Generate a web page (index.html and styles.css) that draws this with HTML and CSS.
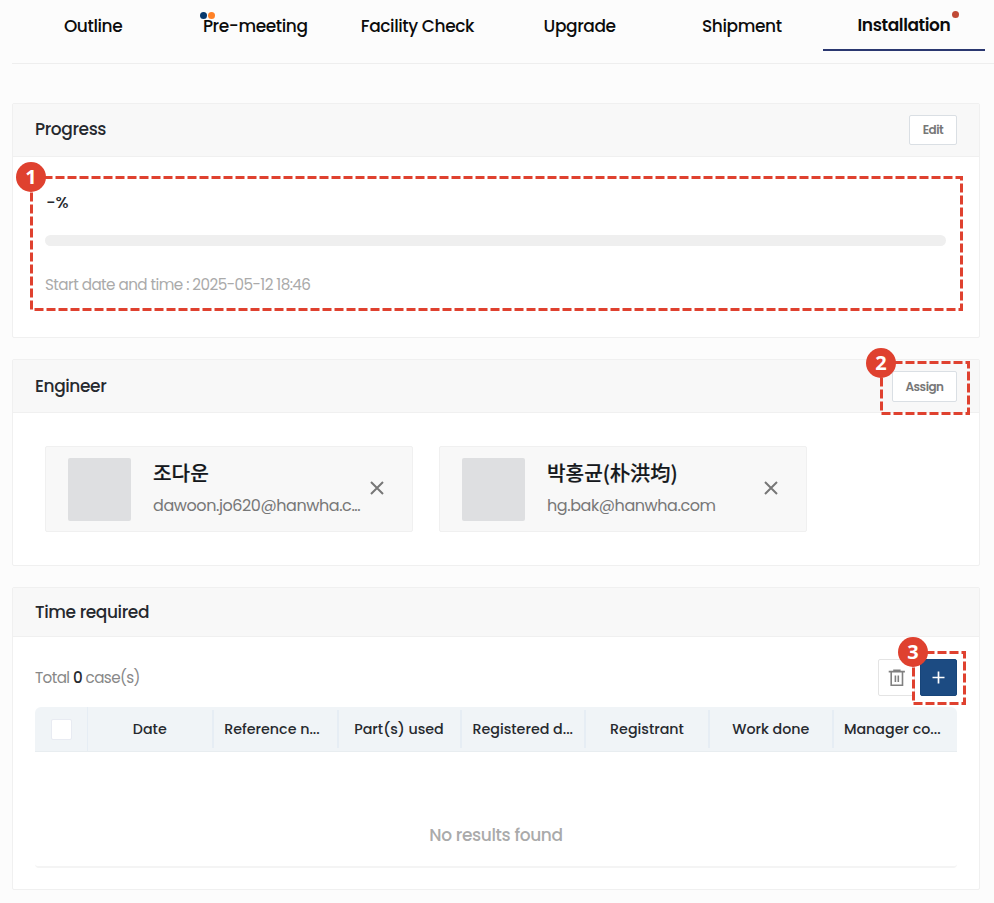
FILE: index.html
```html
<!DOCTYPE html>
<html lang="en">
<head>
<meta charset="utf-8">
<title>Installation</title>
<link rel="stylesheet" href="styles.css">
</head>
<body>
<nav class="tabs">
  <a class="tab"><span>Outline</span></a>
  <a class="tab"><span class="tab-label">Pre-meeting<i class="dot dot-navy"></i><i class="dot dot-orange"></i></span></a>
  <a class="tab"><span>Facility Check</span></a>
  <a class="tab"><span>Upgrade</span></a>
  <a class="tab"><span>Shipment</span></a>
  <a class="tab active"><span class="tab-label">Installation<i class="dot dot-red"></i></span></a>
</nav>
<main>
  <section class="card progress-card">
    <header class="card-head"><h2>Progress</h2><button class="btn edit">Edit</button></header>
    <div class="progress-body">
      <div class="percent">-%</div>
      <div class="bar"></div>
      <p class="start">Start date and time : 2025-05-12 18:46</p>
      <svg class="callout callout-1" width="933" height="135"><path d="M1.5 1.5H931.5V133.5H1.5Z"/></svg>
      <span class="badge badge-1">1</span>
    </div>
  </section>
  <section class="card engineer-card">
    <header class="card-head"><h2>Engineer</h2>
      <div class="anchor"><button class="btn assign">Assign</button>
        <svg class="callout callout-2" width="90" height="54"><path d="M1.5 1.5H88.5V52.5H1.5Z"/></svg>
        <span class="badge badge-2">2</span></div>
    </header>
    <div class="people">
      <article class="person">
        <div class="avatar"></div>
        <div class="info"><strong>조다운</strong><span>dawoon.jo620@hanwha.c...</span></div>
        <svg class="close" width="14" height="14"><path d="M1 1L13 13M13 1L1 13"/></svg>
      </article>
      <article class="person">
        <div class="avatar"></div>
        <div class="info"><strong>박홍균(朴洪均)</strong><span>hg.bak@hanwha.com</span></div>
        <svg class="close" width="14" height="14"><path d="M1 1L13 13M13 1L1 13"/></svg>
      </article>
    </div>
  </section>
  <section class="card time-card">
    <header class="card-head"><h2>Time required</h2></header>
    <div class="time-body">
      <div class="toolbar">
        <p class="total">Total <b>0</b> case(s)</p>
        <div class="tools">
          <button class="tool trash"><svg width="18" height="18"><path d="M.7 2.6H16.9M5.2 1.2H12.6M3.2 3V16.2H14.5V3M7.4 6.5V13M10.3 6.5V13"/></svg></button>
          <div class="anchor"><button class="tool add"><svg width="13" height="13"><path d="M6.5 .5V12.5M.5 6.5H12.5"/></svg></button>
            <svg class="callout callout-3" width="54" height="54"><path d="M1.5 1.5H52.5V52.5H1.5Z"/></svg>
            <span class="badge badge-3">3</span></div>
        </div>
      </div>
      <div class="grid-head">
        <div class="cell check-cell"><span class="check"></span></div>
        <div class="cell">Date</div>
        <div class="cell clipped">Reference n...</div>
        <div class="cell">Part(s) used</div>
        <div class="cell">Registered d...</div>
        <div class="cell">Registrant</div>
        <div class="cell">Work done</div>
        <div class="cell clipped">Manager co...</div>
      </div>
      <div class="empty">No results found</div>
    </div>
  </section>
</main>
</body>
</html>
```
FILE: styles.css
```css
* { box-sizing: border-box; }
body {
  margin: 0;
  height: 903px;
  overflow: hidden;
  background: #fcfcfc;
  font-family: Poppins, Inter, "Noto Sans CJK KR", sans-serif;
  color: #26292e;
}
h2, p { margin: 0; }
button { font: inherit; padding: 0; }
.tabs { display: flex; height: 64px; margin-left: 12px; padding-right: 9px; border-bottom: 1px solid #eee; }
.tab { flex: 1; height: 51px; display: flex; align-items: center; justify-content: center; font-size: 17px; font-weight: 500; letter-spacing: -.4px; color: #0c0c0c; white-space: nowrap; }
.tab.active { border-bottom: 2px solid #2a3770; font-weight: 600; }
.tab-label { position: relative; }
.dot { position: absolute; width: 7px; height: 7px; border-radius: 50%; }
.dot-navy { left: -3px; top: -1px; background: #06386d; }
.dot-orange { left: 5.5px; top: -1px; background: #ff8126; }
.dot-red { right: -9px; top: -1px; background: #c04a35; }

main { padding: 39px 14px 0 12px; display: flex; flex-direction: column; gap: 21px; }
.card { background: #fff; border: 1px solid #f0f0f0; border-radius: 2px; }
.card-head { display: flex; align-items: center; justify-content: space-between; height: 53px; padding: 0 22px; background: #f8f8f8; border-bottom: 1px solid #f0f0f0; }
.card-head h2 { font-size: 17px; font-weight: 500; line-height: 24px; letter-spacing: -.4px; }
.progress-card { height: 235px; }
.progress-card h2 { padding-bottom: 2px; }
.engineer-card { height: 207px; }
.time-card { height: 303px; }
.time-card .card-head { height: 49px; }
.btn { display: block; height: 30px; background: #fff; border: 1px solid #dadfe4; border-radius: 2px; font-size: 12px; font-weight: 600; letter-spacing: -.5px; color: #777; }
.edit { width: 48px; }
.assign { width: 65px; height: 31px; padding-top: 1px; }
.anchor { position: relative; }

.progress-body { position: relative; padding: 34px 33px 0 32px; }
.percent { font-size: 16.5px; font-weight: 500; line-height: 24px; padding-left: 1px; letter-spacing: -.2px; }
.bar { height: 11px; margin-top: 20px; border-radius: 6px; background: #efefef; }
.start { margin-top: 27px; line-height: 24px; font-size: 15.2px; letter-spacing: -.55px; color: #aaa; white-space: nowrap; }

.callout { position: absolute; pointer-events: none; }
.callout path { fill: none; stroke: #df412f; stroke-width: 3; stroke-dasharray: 9 3; }
.callout-1 { left: 17px; top: 19px; }
.callout-2 { left: -12px; top: -10px; }
.callout-3 { left: -8px; top: -8px; }
.badge { position: absolute; width: 30px; height: 30px; border-radius: 50%; background: #df412f; color: #fff; font: 700 20px/29px "Noto Sans", sans-serif; text-align: center; }
.badge-1 { left: 3px; top: 5px; }
.badge-2 { left: -26px; top: -23px; }
.badge-3 { left: -22px; top: -22px; }

.people { display: flex; gap: 26px; padding: 33px 32px 0; }
.person { width: 368px; height: 86px; display: flex; align-items: center; padding: 0 28px 0 22px; background: #f8f8f8; border: 1px solid #f0f0f0; border-radius: 2px; }
.avatar { width: 63px; height: 63px; background: #dedfe1; border-radius: 2px; flex: none; }
.info { flex: 1; margin: 2px 0 0 22px; display: flex; flex-direction: column; min-width: 0; white-space: nowrap; }
.info strong { font: 500 20.2px/30px "Noto Sans CJK KR", sans-serif; color: #15181c; -webkit-text-stroke: .2px #15181c; }
.info span { padding-top: 2px; font-size: 16px; line-height: 32px; letter-spacing: -.42px; color: #777; }
.close { flex: none; margin-top: -3px; }
.close path { stroke: #777; stroke-width: 2; fill: none; }

.time-body { padding: 22px 22px 0; }
.toolbar { display: flex; justify-content: space-between; height: 37px; }
.total { font-size: 15.2px; line-height: 37px; letter-spacing: -.6px; color: #888; }
.total b { font-weight: 500; color: #26292e; }
.tools { display: flex; gap: 5px; }
.tool { display: flex; align-items: center; justify-content: center; width: 37px; height: 37px; border: 1px solid #e4e4e4; border-radius: 2px; background: #fff; }
.trash path { fill: none; stroke: #808080; stroke-width: 1.6; }
.add { background: #1c4b82; border-color: #17457a; }
.add path { stroke: #fff; stroke-width: 1.7; }
.grid-head { display: grid; grid-template-columns: 53px 125.5px 125px 123px 124.5px 124px 123.5px 1fr; height: 45px; margin-top: 11px; background: #f0f4f7; border-bottom: 1px solid #e8edf0; border-radius: 6px 6px 0 0; }
.cell { display: flex; align-items: center; justify-content: center; font-size: 14.25px; font-weight: 500; white-space: nowrap; margin: 3px 0; border-right: 2px solid #e6edf4; }
.cell:last-child { border-right: 0; }
.clipped { padding-right: 6px; }
.check-cell { margin: 0; border-right-width: 1px; }
.check { width: 21px; height: 21px; border: 1px solid #e8ebf2; border-radius: 2px; background: #fff; }
.empty { height: 116px; padding-top: 71px; font-size: 17px; line-height: 24px; letter-spacing: -.35px; font-weight: 500; text-align: center; color: #aaa; border-bottom: 2px solid #f4f4f4; border-radius: 0 0 4px 4px; }
```
